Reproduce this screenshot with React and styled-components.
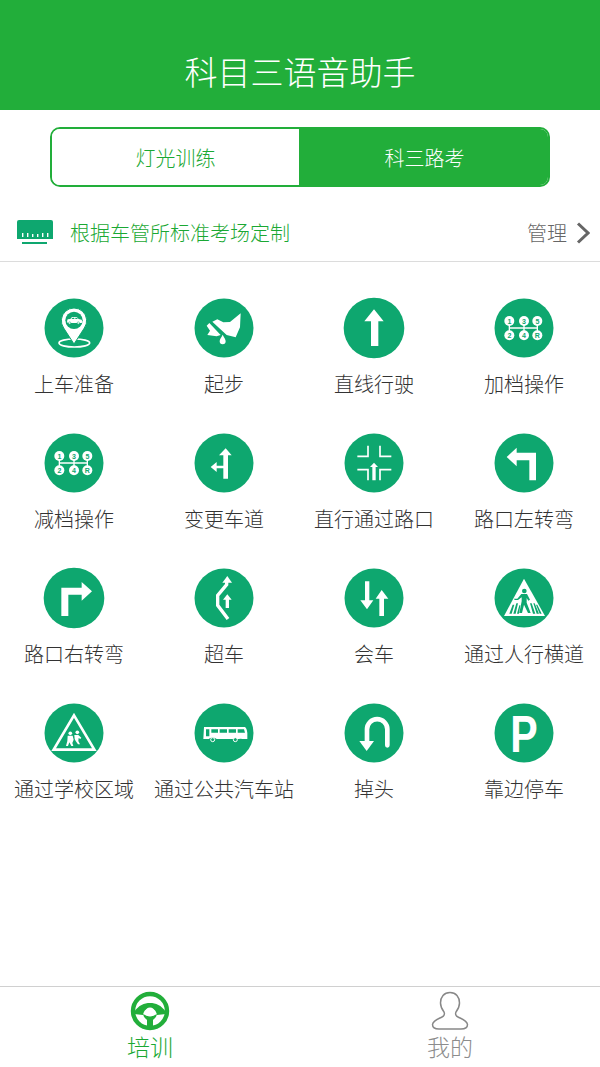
import React from 'react';
import styled, { createGlobalStyle } from 'styled-components';

const GREEN = '#22ae3a';
const TEXT_GREEN = '#1aa833';
const TEAL = '#0ea76f';
const FONT = '"Noto Sans CJK SC", "Noto Sans", sans-serif';

const Global = createGlobalStyle`
  html, body { margin: 0; padding: 0; background: #fff; }
  body { font-family: ${FONT}; font-weight: 300; }
  * { box-sizing: border-box; }
`;

const Page = styled.div`
  width: 600px;
  height: 1067px;
  display: flex;
  flex-direction: column;
  overflow: hidden;
  background: #fff;
`;
const Header = styled.header`
  height: 110px;
  flex: none;
  background: ${GREEN};
  display: flex;
  justify-content: center;
  align-items: flex-end;
  padding-bottom: 15px;
`;
const Title = styled.h1`
  margin: 0;
  color: #fff;
  font-size: 33px;
  line-height: 48px;
  font-weight: 300;
`;
const Segments = styled.div`
  margin: 17px 50px 0;
  height: 60px;
  flex: none;
  display: flex;
  border: 2px solid ${GREEN};
  border-radius: 10px;
  overflow: hidden;
`;
const Segment = styled.div`
  flex: none;
  width: ${p => (p.$active ? '251px' : '247px')};
  margin-right: ${p => (p.$active ? '-2px' : '0')};
  display: flex;
  align-items: center;
  justify-content: center;
  font-size: 20px;
  color: ${p => (p.$active ? '#fff' : TEXT_GREEN)};
  background: ${p => (p.$active ? GREEN : '#fff')};
`;
const InfoRow = styled.div`
  height: 55px;
  margin-top: 20px;
  flex: none;
  display: flex;
  align-items: center;
  padding: 0 10px 3px 17px;
  border-bottom: 1px solid #dcdcdc;
`;
const InfoText = styled.span`
  margin-left: 17px;
  font-size: 20px;
  color: ${TEXT_GREEN};
  flex: 1;
`;
const Manage = styled.span`
  font-size: 20px;
  color: #666;
  margin-right: 9px;
`;
const Grid = styled.main`
  flex: 1;
  display: grid;
  grid-template-columns: repeat(4, 150px);
  grid-auto-rows: 135px;
  align-content: start;
  margin-left: -1px;
  padding-top: 36px;
`;
const Cell = styled.div`
  display: flex;
  flex-direction: column;
  align-items: center;
`;
const Badge = styled.svg`
  width: 60px;
  height: 60px;
  display: block;
  flex: none;
  overflow: visible;
`;
const Label = styled.span`
  margin-top: 11px;
  font-size: 20px;
  line-height: 30px;
  color: #333;
  white-space: nowrap;
`;
const TabBar = styled.nav`
  height: 81px;
  flex: none;
  border-top: 1px solid #d0d0d0;
  display: grid;
  grid-template-columns: 1fr 1fr;
`;
const Tab = styled.div`
  display: flex;
  flex-direction: column;
  align-items: center;
  padding-top: 4px;
  color: ${p => (p.$active ? TEXT_GREEN : '#8c8c8c')};
  font-size: 23px;
  line-height: 32px;
`;
const TabIcon = styled.svg`
  width: 40px;
  height: 40px;
  display: block;
  margin-bottom: -1px;
`;
const GearDigit = styled.text`
  font-family: "Liberation Sans", sans-serif;
  font-size: 21px;
  font-weight: 700;
  fill: ${TEAL};
  text-anchor: middle;
`;
const SignLetter = styled.text`
  font-family: "Liberation Sans", sans-serif;
  font-size: 158px;
  font-weight: 700;
  fill: #fff;
`;

const W = '#fff';

const Gears = () => (
  <>
    <path d="M46 69V112M90 69V112M130 69V112M46 90H130" stroke={W} strokeWidth="4" fill="none" />
    {[[46, 69, '1'], [90, 69, '3'], [130, 69, '5'], [46, 112, '2'], [90, 112, '4'], [130, 112, 'R']].map(([x, y, d]) => (
      <g key={d}>
        <circle cx={x} cy={y} r="15" fill={W} />
        <GearDigit x={x} y={y + 7.500}>{d}</GearDigit>
      </g>
    ))}
  </>
);

const icons = {
  pin: (
    <>
      <ellipse cx="91" cy="135" rx="46" ry="12" fill="none" stroke={W} strokeWidth="5" />
      <path d="M90 138L59 90A38 38 0 1 1 121 90Z" fill={W} stroke={TEAL} strokeWidth="3" />
      <circle cx="90" cy="67" r="26" fill={TEAL} />
      <path d="M69 70l2-6 8-1 5-6h14l6 6 9 2 2 6-2 4H71z" fill={W} />
      <path d="M82 63l4-4h5v4zM94 59h4l4 4h-8z" fill={TEAL} />
      <circle cx="77" cy="75" r="3.5" fill={W} stroke={TEAL} strokeWidth="1.5" />
      <circle cx="103" cy="75" r="3.5" fill={W} stroke={TEAL} strokeWidth="1.5" />
    </>
  ),
  pedal: (
    <>
      <path d="M55 71L70 64L88 73L108 72L140 46L138 88L125 118L98 111Z" fill={W} />
      <path d="M38 83L46 75L80 111L68 115L40 111L48 98Z" fill={W} />
      <path d="M86 110C81 120 77 124 77 130A9 9 0 0 0 95 130C95 124 91 120 86 110Z" fill={W} />
    </>
  ),
  up: <path d="M90 34L119 70H103V144H81V70H61Z" fill={W} />,
  gearA: <Gears />,
  gearB: <Gears />,
  lane: (
    <path d="M95 46L113 67H102V137H88V106H68V117L50 102L68 87V98H88V67H75Z" fill={W} />
  ),
  cross: (
    <>
      <path d="M40 70H72V38M108 38V70H142M40 110H72V142M142 110H108V142" fill="none" stroke={W} strokeWidth="5" />
      <path d="M90 89L102 102H95V142H85V102H78Z" fill={W} />
    </>
  ),
  left: <path d="M38 72L68 44V59H126V142H106V82H68V100Z" fill={W} />,
  right: <path d="M144 70L113 42V59H52V144H73V80H113V98Z" fill={W} />,
  pass: (
    <>
      <path d="M102 153L71 112V82L98 50V40" fill="none" stroke={W} strokeWidth="10" />
      <path d="M100 24L114 44H85Z" fill={W} />
      <path d="M100 79L113 95H105V120H95V95H87Z" fill={W} />
    </>
  ),
  meet: (
    <path d="M63 40H76V97H88L69 124L49 97H63ZM113 66L133 92H120V144H106V92H95Z" fill={W} />
  ),
  walker: (
    <>
      <path d="M90 32L153 144H30Z" fill={W} />
      <circle cx="91" cy="69" r="7" fill={TEAL} />
      <path d="M82 78H99L108 95L103 98L98 90V104L110 135H102L90 110L84 135H76L83 100V88L72 96H62L60 92H70Z" fill={TEAL} />
      <path d="M46 137L56 110H61L53 137ZM58 137L67 106H72L65 137ZM69 137L76 112H79L75 137ZM108 106H113L124 137H117ZM118 106H122L135 137H128ZM126 110H130L143 137H137Z" fill={TEAL} />
    </>
  ),
  school: (
    <>
      <path d="M90 37L151 140H29Z" fill="none" stroke={W} strokeWidth="8" />
      <circle cx="79" cy="91" r="5.500" fill={W} />
      <circle cx="100" cy="88" r="5.500" fill={W} />
      <path d="M71 98H86L89 110L85 120L88 129H82L76 118L72 129H66L70 114ZM91 96H103L112 104L109 108L104 105L103 114L108 124H102L95 114L92 108Z" fill={W} />
    </>
  ),
  bus: (
    <>
      <path d="M30 72H152Q158 74 160 90V108H146A14 10 0 0 0 134 108H68A14 10 0 0 0 44 108H28Z" fill={W} />
      <path d="M36 79H46V100H36ZM52 79H72V89H52ZM77 79H99V89H77ZM104 79H126V89H104ZM131 79H150L153 89H131Z" fill={TEAL} />
      <circle cx="56" cy="110" r="6" fill={TEAL} stroke={W} strokeWidth="3" />
      <circle cx="124" cy="110" r="6" fill={TEAL} stroke={W} strokeWidth="3" />
    </>
  ),
  uturn: (
    <>
      <path d="M130 127V79A30.5 30.5 0 0 0 69 79V116" fill="none" stroke={W} strokeWidth="14" strokeLinecap="round" />
      <path d="M68 144L46 114H90Z" fill={W} />
    </>
  ),
  park: <SignLetter transform="translate(49 147) scale(0.78 1)">P</SignLetter>,
};

const items = [
  ['上车准备', 'pin'], ['起步', 'pedal'], ['直线行驶', 'up', true], ['加档操作', 'gearA'],
  ['减档操作', 'gearB'], ['变更车道', 'lane'], ['直行通过路口', 'cross'], ['路口左转弯', 'left'],
  ['路口右转弯', 'right', true], ['超车', 'pass'], ['会车', 'meet'], ['通过人行横道', 'walker'],
  ['通过学校区域', 'school'], ['通过公共汽车站', 'bus'], ['掉头', 'uturn'], ['靠边停车', 'park'],
];

const Ruler = () => (
  <svg width="36" height="25" viewBox="0 0 36 25" aria-hidden="true">
    <path d="M2 0H34A2 2 0 0 1 36 2V19H0V2A2 2 0 0 1 2 0Z" fill={TEAL} />
    <path d="M5 13h1.4v4H5zM10 13h1.4v4H10zM15 14h1.4v3H15zM20 14h1.4v3H20zM25 13h1.4v4H25zM30 13h1.4v4H30z" fill="#fff" />
    <rect x="5" y="22" width="25" height="2" fill={TEAL} />
  </svg>
);
const Chevron = () => (
  <svg width="14" height="22" viewBox="0 0 14 22" aria-hidden="true">
    <path d="M2 1.500L12 11L2 20.500" fill="none" stroke="#666" strokeWidth="3" />
  </svg>
);
const Wheel = () => (
  <TabIcon viewBox="0 0 40 40" aria-hidden="true">
    <circle cx="20" cy="20" r="17" fill="none" stroke={GREEN} strokeWidth="4.4" />
    <path d="M4 21C9 14 14 12 20 12C26 12 31 14 36 21L36 23L27 24C26 19 23 17 20 17C17 17 14 19 13 24L4 23Z" fill={GREEN} />
    <path d="M13 23C14 27 16 28 17 29V36H23V29C24 28 26 27 27 23L23 25H17Z" fill={GREEN} />
    <circle cx="20" cy="21" r="4.5" fill="#fff" />
  </TabIcon>
);
const User = () => (
  <TabIcon viewBox="0 0 40 40" aria-hidden="true">
    <path
      d="M20 1.5C14 1.5 10.5 6 10.5 12C10.5 16 12.500 19 14 21C15 23 14 25 12 26C8 28 3 29.500 2.500 33.500C2.500 36.500 5 38 9 38H31C35 38 37.500 36.500 37.500 33.500C37 29.500 32 28 28 26C26 25 25 23 26 21C27.500 19 29.500 16 29.500 12C29.500 6 26 1.500 20 1.500Z"
      fill="none"
      stroke="#888"
      strokeWidth="1.5"
    />
  </TabIcon>
);

export default function App() {
  return (
    <Page>
      <Global />
      <Header><Title>科目三语音助手</Title></Header>
      <Segments>
        <Segment>灯光训练</Segment>
        <Segment $active>科三路考</Segment>
      </Segments>
      <InfoRow>
        <Ruler />
        <InfoText>根据车管所标准考场定制</InfoText>
        <Manage>管理</Manage>
        <Chevron />
      </InfoRow>
      <Grid>
        {items.map(([label, icon, big]) => (
          <Cell key={label}>
            <Badge viewBox="0 0 180 180" aria-hidden="true">
              <circle cx="90" cy="90" r={big ? 91 : 88.500} fill={TEAL} />
              {icons[icon]}
            </Badge>
            <Label>{label}</Label>
          </Cell>
        ))}
      </Grid>
      <TabBar>
        <Tab $active><Wheel />培训</Tab>
        <Tab><User />我的</Tab>
      </TabBar>
    </Page>
  );
}
